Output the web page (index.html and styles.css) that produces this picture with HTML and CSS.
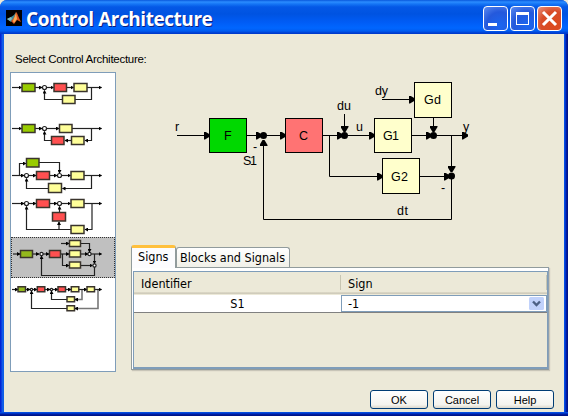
FILE: index.html
```
<!DOCTYPE html>
<html lang="en">
<head>
<meta charset="utf-8">
<title>Control Architecture</title>
<link rel="stylesheet" href="styles.css">
</head>
<body>
<svg width="0" height="0" class="defs">
  <defs>
    <marker id="tip" markerUnits="userSpaceOnUse" markerWidth="4" markerHeight="4" refX="3" refY="2" orient="auto"><path class="tip" d="M0 0L3.500 2L0 4Z"/></marker>
    <marker id="arrow" markerUnits="userSpaceOnUse" markerWidth="6" markerHeight="8" refX="5" refY="4" orient="auto"><path d="M0 0H1L6 3V5L1 8H0Z"/></marker>
  </defs>
</svg>
<div class="window">
  <header class="titlebar">
    <svg class="logo" width="16" height="16" viewBox="0 0 16 16"><path fill="#000" d="M0 0H16V16H0Z"/><path fill="#3d8f9c" d="M1 9L5 7L8 5L10 2L8 9L5 12Z"/><path fill="#86bac0" d="M1 9L5 7L6 9L4 11Z"/><path fill="#d9501c" d="M10 2C11 2 12 6 15 12L11 10L8 14L5 11Q8 9 10 2Z"/><path fill="#f5ad58" d="M10 3L11 9L8 13L7 11Z"/></svg>
    <h1>Control Architecture</h1>
    <div class="controls">
      <span class="ctl"><svg width="23" height="23"><path fill="#fff" d="M4 16H13V19H4Z"/></svg></span>
      <span class="ctl"><svg width="23" height="23"><path fill="#fff" fill-rule="evenodd" d="M5 5H18V18H5ZM6 8V17H17V8Z"/></svg></span>
      <span class="ctl close"><svg width="23" height="23"><path stroke="#fff" stroke-width="3" d="M5 5L18 18M18 5L5 18"/></svg></span>
    </div>
  </header>
  <main>
    <p class="prompt">Select Control Architecture:</p>
    <div class="columns">
      <div class="list">
        <svg viewBox="11 73 104 41"><g class="w"><path d="M12 87.5H21.500"/><path d="M35 87.5H42"/><path d="M47 87.5H53.500"/><path d="M66 87.5H73.500"/><path d="M87 87.5H101.500"/><path d="M91.500 87.500V99.500H44.500V90.500"/></g><circle cx="44.5" cy="87.5" r="2"/><path class="g" d="M22 83.5h13v8h-13z"/><path class="r" d="M54 83.5h12.500v8h-12.500z"/><path class="y" d="M74 83.500h13v8h-13zM62.500 95.500h12.500v8h-12.500z"/></svg>
        <svg viewBox="11 114 104 41"><g class="w"><path d="M12 128.500H21.500"/><path d="M35 128.500H42"/><path d="M47 128.500H59"/><path d="M72 128.500H101.500"/><path d="M91.500 128.500V140.500H85"/><path d="M71 140.500H65"/><path d="M51 140.500H44.500V131.500"/></g><circle cx="44.5" cy="128.5" r="2"/><path class="g" d="M22 124.500h13v8h-13z"/><path class="y" d="M59.500 124.500h12.500v8h-12.500zM71.500 136.500h12.500v8h-12.500z"/><path class="r" d="M51.500 136.500h12.500v8h-12.500z"/></svg>
        <svg viewBox="11 155 104 41"><g class="w"><path d="M12 175.500H24"/><path d="M19.500 175.500V163.500H26"/><path d="M29 175.500H36"/><path d="M50 175.500H57"/><path d="M62 175.500H70.500"/><path d="M84 175.500H101.500"/><path d="M39 162.500H59.500V173"/><path d="M91.500 175.500V188.500H62.500"/><path d="M48 188.500H26.500V178.500"/></g><circle cx="26.5" cy="175.5" r="2"/><circle cx="59.5" cy="175.5" r="2"/><path class="g" d="M26.500 158.500h12.500v8.500h-12.500z"/><path class="r" d="M36.500 171.500h13v8h-13z"/><path class="y" d="M71 171.500h13v8h-13zM48.500 183.500h13v9h-13z"/></svg>
        <svg viewBox="11 196 104 41"><g class="w"><path d="M12 203.500H24"/><path d="M29 203.500H36"/><path d="M50 203.500H57"/><path d="M62 203.500H70.500"/><path d="M84 203.500H101.500"/><path d="M92 203.500V229.500H85"/><path d="M71 229.500H26.500V206.500"/><path d="M59 229.500V222"/><path d="M59.500 212V206.500"/></g><circle cx="26.5" cy="203.5" r="2"/><circle cx="59.5" cy="203.5" r="2"/><path class="r" d="M36.500 199.500h13v8h-13zM52.500 212.500h13v8.500h-13z"/><path class="y" d="M71 199.500h13v8h-13zM71 225.500h13v8h-13z"/></svg>
        <svg class="selected" viewBox="11 237 104 41"><g class="w"><path d="M13 254H20"/><path d="M33 254H39"/><path d="M43 254H49"/><path d="M60.500 254H69"/><path d="M80.500 254H88"/><path d="M91 254H101.500"/><path d="M61 243.500H69"/><path d="M62.500 254V265.500H69"/><path d="M81 265.500H92.500"/><path d="M80.500 243.500H89.500V252"/><path d="M94.500 254V263.500"/><path d="M94.500 265V275.500H41.500V256"/></g><circle cx="41.5" cy="254" r="1.600"/><circle cx="89.5" cy="254" r="1.600"/><circle cx="94.5" cy="265.500" r="1.600"/><path class="g dim" d="M20.500 250.500h12v7h-12z"/><path class="r" d="M49.500 250.500h11v7h-11z"/><path class="y" d="M69.500 250.500h11v6.500h-11zM69.500 240.500h11v6h-11zM69.500 262h11v6h-11z"/></svg>
        <svg viewBox="11 278 104 41"><path class="l soft" d="M82 290V299.500H75M98 290V308.500H75"/><g class="w"><path d="M12 289.500H18"/><path d="M26 289.500H30"/><path d="M33 289.500H37"/><path d="M45 289.500H50"/><path d="M53 289.500H58"/><path d="M66 289.500H71"/><path d="M79 289.500H87"/><path d="M95 289.500H101.500"/><path d="M67 299.500H51.500V291"/><path d="M67 308.500H31.500V291"/><path d="M78 299.500H75"/><path d="M78 308.500H75"/></g><circle cx="31.500" cy="289.500" r="1.200"/><circle cx="51.500" cy="289.500" r="1.200"/><path class="g dim" d="M18 286.800h7.500v5h-7.500z"/><path class="r" d="M37.300 286.800h7.500v5h-7.500zM58 286.800h7.500v5h-7.500z"/><path class="y" d="M71.300 286.800h7.500v5h-7.500zM87 286.800h7.500v5h-7.500zM67 296.800h7.500v5h-7.500zM67 305.800h7.500v5h-7.500z"/></svg>
      </div>
      <div class="detail">
        <svg class="diagram" viewBox="131 72 418 173">
          <g class="blocks">
            <rect x="209.5" y="118.5" width="37" height="34" fill="#00d800"/><rect x="285.5" y="118.5" width="37" height="34" fill="#ff7373"/>
            <rect x="374.5" y="118.5" width="37" height="34"/><rect x="382.500" y="158.500" width="37" height="35"/><rect x="414.500" y="82.500" width="37" height="35"/>
          </g>
          <g class="wires">
            <path d="M177 135.500H209"/><path d="M247 135.500H261"/><path d="M263 135.500H285"/><path d="M323 135.500H342"/><path d="M344 135.500H374"/><path d="M412 135.500H431"/><path d="M433 135.500H467"/>
            <path d="M329.500 135V176.500H382"/><path d="M420 176.500H449"/><path d="M382 99.500H414"/><path d="M344.500 114V131"/><path d="M433.500 118V131"/><path d="M451.500 135V171"/><path d="M451.500 176V219.500H263.500V141"/>
          </g>
          <g class="nodes"><circle cx="263.500" cy="135.500" r="3.500"/><circle cx="344.500" cy="135.500" r="3.500"/><circle cx="433.500" cy="135.500" r="3.500"/><circle cx="451.500" cy="176" r="3.500"/></g>
          <g class="labels">
            <text x="175" y="131">r</text><text x="224" y="140">F</text><text x="299" y="140">C</text><text x="383" y="140" textLength="16">G1</text><text x="391" y="181" textLength="17">G2</text><text x="424" y="104" textLength="17">Gd</text>
            <text x="375" y="95" textLength="13">dy</text><text x="337" y="110" textLength="14">du</text><text x="356" y="131">u</text><text x="463" y="131">y</text><text x="243" y="165" textLength="14">S1</text><text x="397" y="215" textLength="11">dt</text><text x="253" y="151">-</text><text x="441" y="192">-</text>
          </g>
        </svg>
        <div class="tabs"><span class="tab active">Signs</span><span class="tab">Blocks and Signals</span></div>
        <div class="pane">
          <div class="table">
            <div class="row head"><span>Identifier</span><span>Sign</span></div>
            <div class="row"><span class="id">S1</span><span class="select">-1<svg width="15" height="13" viewBox="0 0 15 13"><rect width="15" height="13" rx="1.500" fill="#c1d2fb"/><path d="M4 4.500L7.500 8L11 4.500" fill="none" stroke="#4d6185" stroke-width="2.400"/></svg></span></div>
          </div>
        </div>
      </div>
    </div>
    <footer><button>OK</button><button>Cancel</button><button>Help</button></footer>
  </main>
</div>
</body>
</html>
```
FILE: styles.css
```
* { box-sizing: border-box; }
body { margin: 0; background: #ece9d8; font-family: "Liberation Sans", sans-serif; color: #000; overflow: hidden; }
svg { display: block; }
.defs { position: absolute; }
.window {
  width: 568px; height: 416px; display: flex; flex-direction: column;
  padding: 0 4px 4px; border-radius: 7px 7px 0 0;
  background: linear-gradient(90deg, #0019cf 0, #0831d9 1px, #166aee 3px, #0855dd 4px, #0855dd 564px, #0046e8 565px, #0020b0 566px, #00107c 568px);
}
.titlebar {
  height: 34px; flex: none; margin: 0 -4px; padding: 0 6px; display: flex; align-items: center;
  border-radius: 7px 7px 0 0;
  background: linear-gradient(#0958dc 0, #2b8cff 2px, #1575f5 4px, #0458e6 7px, #0053e1 14px, #005cf5 22px, #0066ff 28px, #005cf0 31px, #003dd0 33px, #0038c8);
}
.logo { margin-top: 2px; }
h1 {
  margin: 3px 0 0 4px; flex: 1; color: #fff; font: bold 19px/24px "Open Sans", sans-serif;
  letter-spacing: -.45px; white-space: nowrap; text-shadow: 1px 1px 0 #0a1f80;
}
.controls { display: flex; gap: 2px; margin-top: 3px; }
.ctl {
  width: 25px; height: 25px; border: 1px solid #fff; border-radius: 4px;
  background: radial-gradient(circle at 70% 80%, #1b66f0, #2459dc 55%, #5d8cf0 100%);
}
.ctl.close { background: radial-gradient(circle at 70% 75%, #dc4a1c, #d84c28 55%, #eb9580 100%); }
main { flex: 1; padding: 17px 15px 0 6px; background: #ece9d8; display: flex; flex-direction: column; }
.window::after { content: ""; height: 4px; margin: 0 -4px -4px; flex: none; background: linear-gradient(#0855dd 0, #0046e0 1px, #0020a8 2px, #00107c); }
.prompt { margin: 0 0 0 5px; height: 21px; font-size: 11.500px; line-height: 16px; letter-spacing: -.28px; white-space: nowrap; }
.columns { display: flex; gap: 15px; height: 300px; }
.list { width: 106px; border: 1px solid #7f9db9; background: #fff; }
.list svg { width: 104px; height: 41px; }
.list .selected { background: #c0c0c0; outline: 1px dotted #333; outline-offset: -1px; }
.list path, .list circle { stroke: #222; stroke-width: 1.200; }
.list .w path { fill: none; marker-end: url(#tip); }
.list .l { fill: none; }
.list .soft { stroke: #777; stroke-width: 1.600; }
.list circle { fill: #fff; }
.list .g { fill: #99cc00; }
.list .dim { fill: #94b91c; }
.list .r { fill: #ff5050; }
.list .y { fill: #ffff99; }
.list .g, .list .r, .list .y { stroke: #3a342c; stroke-width: 1.500; }
.detail { width: 418px; }
.diagram { width: 418px; height: 173px; }
.blocks { fill: #ffffcc; stroke: #000; }
.wires path { fill: none; stroke: #000; marker-end: url(#arrow); }
.labels { font-size: 12.500px; }
.tabs { display: flex; align-items: flex-end; height: 22px; font: 12.500px/19px "DejaVu Sans Condensed", "DejaVu Sans", sans-serif; }
.tab {
  height: 20px; width: 114px; padding-left: 3px; white-space: nowrap;
  border: 1px solid #919b9c; border-bottom: 0; border-radius: 3px 3px 0 0;
  background: linear-gradient(#fff, #f1f0e8);
}
.tab.active { width: 45px; height: 23px; margin-bottom: -1px; padding-left: 6px; border-top: 3px solid #ffc03c; background: #fcfcfe; z-index: 1; line-height: 17px; }
.pane { height: 103px; border: 1px solid #919b9c; border-right-color: #8da0b2; padding: 3px 0 0 1px; background: #fff; box-shadow: 1px 1px 1px #c8c5b8; }
.table { height: 98px; border: 1px solid #7f9db9; border-bottom-width: 2px; background: #ece9d8; font: 12.500px/18px "DejaVu Sans Condensed", "DejaVu Sans", sans-serif; }
.row { display: grid; grid-template: 100% / 207px 1fr; height: 18px; background: #fff; border-bottom: 1px solid #808080; }
.head { height: 23px; border-bottom: 0; background: linear-gradient(#ece9d8 20px, #dedac8 20px, #cbc7b8 22px, #ece9d8 22px); }
.head span { height: 15px; margin-top: 3px; padding-left: 7px; border-right: 1px solid #c7c5b2; line-height: 18px; }
.id { text-align: center; line-height: 17px; }
.select { display: flex; justify-content: space-between; align-items: center; height: 17px; padding: 0 2px 0 6px; border: 1px solid #7f9db9; line-height: 15px; }
footer { display: flex; justify-content: flex-end; gap: 5px; margin: 18px -5px 0 0; }
button {
  width: 58px; height: 19px; padding: 0; border: 1px solid #003c74; border-radius: 3px;
  background: linear-gradient(#fff, #f4f3ee 80%, #dcd8cc); font: 11px/16px "Liberation Sans", sans-serif; color: #000;
}
```
